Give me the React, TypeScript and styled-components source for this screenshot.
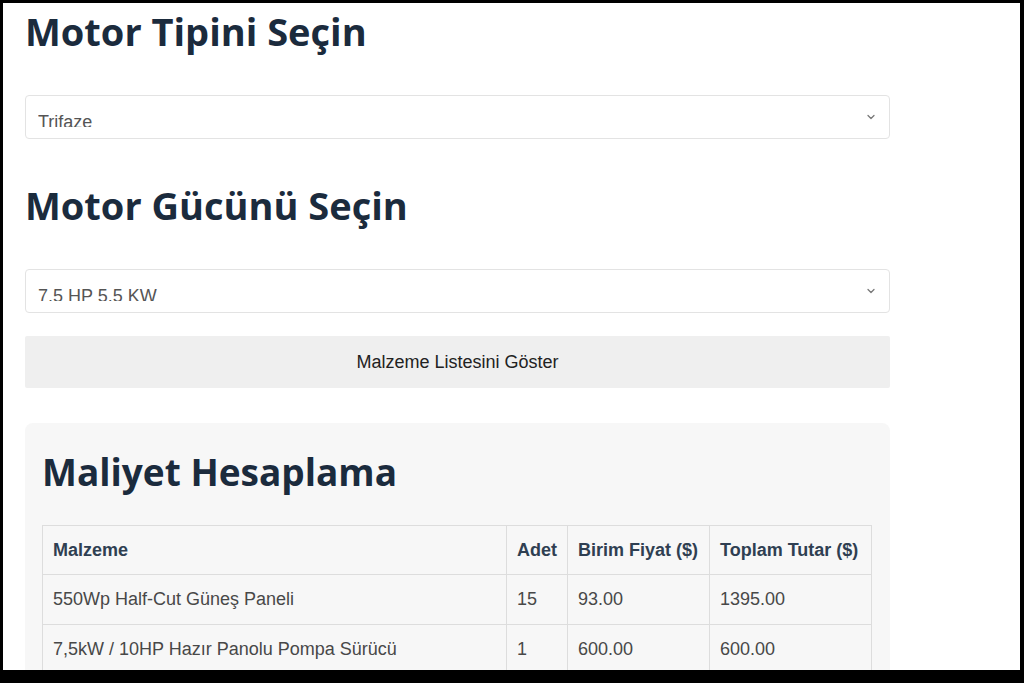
import React from "react"
import styled, { createGlobalStyle } from "styled-components"
import { ChevronDown } from "lucide-react"

const GlobalStyle = createGlobalStyle`
  html, body {
    margin: 0;
    background: #000;
  }
`

const Frame = styled.div`
  margin: 3px 4px 0 3px;
  height: 667px;
  background: #fff;
  overflow: hidden;
`

const Container = styled.div`
  width: 865px;
  padding: 5px 0 0 22px;
`

const Heading = styled.h2`
  margin: 0;
  font-family: "Open Sans", "Noto Sans", sans-serif;
  font-weight: 700;
  font-size: 38px;
  line-height: 46px;
  color: #1b2b3d;
`

const CardHeading = styled(Heading)`
  font-size: 37px;
`

const Field = styled.div`
  position: relative;
  height: 44px;
  margin: 41px 0 0;
  box-sizing: border-box;
  border: 1px solid #e3e3e3;
  border-radius: 4px;
  background: #fff;
  padding: 14px 12px 0;
  font-family: "Liberation Sans", Arial, sans-serif;
  font-size: 18px;
  line-height: 24px;
  color: #555;
`

const Value = styled.span`
  display: block;
  height: 17px;
  overflow: hidden;
`

const Chevron = styled(ChevronDown)`
  position: absolute;
  right: 12px;
  top: 15px;
  color: #777;
`

const SectionGap = styled.div`
  height: 43px;
`

const ShowButton = styled.button`
  display: block;
  width: 100%;
  height: 52px;
  margin-top: 23px;
  border: none;
  border-radius: 2px;
  background: #efefef;
  font-family: "Liberation Sans", Arial, sans-serif;
  font-size: 18px;
  color: #222;
  cursor: pointer;
`

const Card = styled.section`
  margin-top: 35px;
  padding: 26px 18px 20px 17px;
  background: #f7f7f7;
  border-radius: 8px;
`

const Table = styled.table`
  width: 100%;
  margin-top: 30px;
  border-collapse: collapse;
  font-family: "Liberation Sans", Arial, sans-serif;
  font-size: 18px;
  color: #484848;
`

const Th = styled.th<{ $w?: number }>`
  width: ${(p) => (p.$w ? `${p.$w}px` : "auto")};
  height: 49px;
  box-sizing: border-box;
  padding: 0 10px;
  border: 1px solid #ddd;
  text-align: left;
  font-weight: 700;
  color: #2f3f52;
`

const Td = styled.td`
  height: 50px;
  box-sizing: border-box;
  padding: 0 10px;
  border: 1px solid #ddd;
`

const rows = [
  ["550Wp Half-Cut Güneş Paneli", "15", "93.00", "1395.00"],
  ["7,5kW / 10HP Hazır Panolu Pompa Sürücü", "1", "600.00", "600.00"],
]

function SelectField({ value }: { value: string }) {
  return (
    <Field role="combobox">
      <Value>{value}</Value>
      <Chevron size={12} strokeWidth={2.5} />
    </Field>
  )
}

export default function App() {
  return (
    <>
      <GlobalStyle />
      <Frame>
        <Container>
          <Heading>Motor Tipini Seçin</Heading>
          <SelectField value="Trifaze" />
          <SectionGap />
          <Heading>Motor Gücünü Seçin</Heading>
          <SelectField value="7.5 HP 5.5 KW" />
          <ShowButton>Malzeme Listesini Göster</ShowButton>
          <Card>
            <CardHeading>Maliyet Hesaplama</CardHeading>
            <Table>
              <thead>
                <tr>
                  <Th>Malzeme</Th>
                  <Th $w={60}>Adet</Th>
                  <Th $w={142}>Birim Fiyat ($)</Th>
                  <Th $w={162}>Toplam Tutar ($)</Th>
                </tr>
              </thead>
              <tbody>
                {rows.map((r) => (
                  <tr key={r[0]}>
                    {r.map((c, i) => (
                      <Td key={i}>{c}</Td>
                    ))}
                  </tr>
                ))}
              </tbody>
            </Table>
          </Card>
        </Container>
      </Frame>
    </>
  )
}
